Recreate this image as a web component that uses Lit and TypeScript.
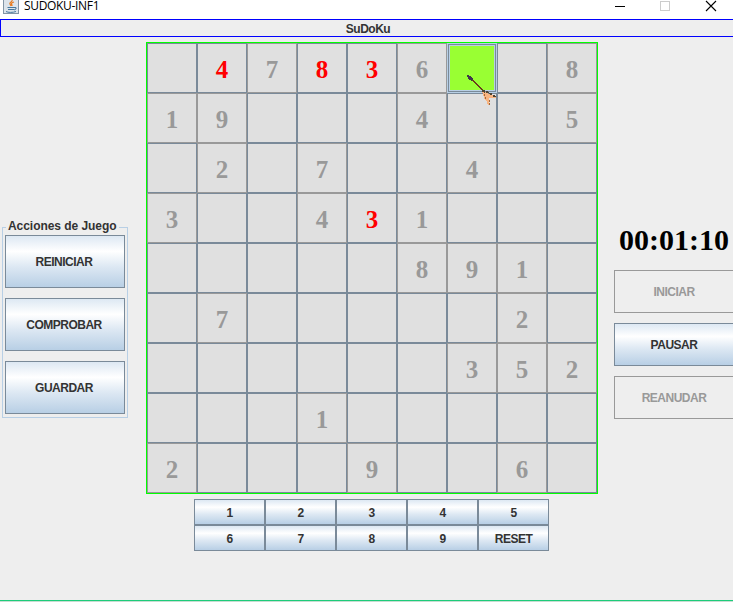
import { LitElement, html, css, svg } from "lit";
import { customElement } from "lit/decorators.js";
import { classMap } from "lit/directives/class-map.js";

// Digits typed by the player carry a trailing "!"; "*" is the selected cell.
const ROWS = [
  ". 4! 7 8! 3! 6 * . 8",
  "1 9 . . . 4 . . 5",
  ". 2 . 7 . . 4 . .",
  "3 . . 4 3! 1 . . .",
  ". . . . . 8 9 1 .",
  ". 7 . . . . . 2 .",
  ". . . . . . 3 5 2",
  ". . . 1 . . . . .",
  "2 . . . 9 . . 6 .",
].map((r) => r.split(" "));

const KEYS = ["1", "2", "3", "4", "5", "6", "7", "8", "9", "RESET"];

const arrow = svg`
  <path d="M9 10 L22 22" stroke="#6b3d1c" stroke-width="1.2"/>
  <path d="M5 6h2v1h2v1h1v1h1v2h-1v1h-1v-1H7v-1H6V8H5z" fill="#40384c"/>
  <path d="M20 22 L24 23 L29 26 L34 27 V29 H28 L27 29 V36 H26 L25 33 L23 31z" fill="#f9b581"/>
  <path d="M20 22 L25 23 L29 25 L34 28" stroke="#4e4434" stroke-width="2" stroke-dasharray="3 1"/>
  <path d="M22 25 L24 31 M27 31 V36" stroke="#a2683e" stroke-width="1" stroke-dasharray="2 1"/>`;

@customElement("app-root")
export class AppRoot extends LitElement {
  static styles = css`
    :host {
      display: flex;
      flex-direction: column;
      width: 733px;
      height: 602px;
      overflow: hidden;
      background: #eee;
      color: #333;
      font: bold 12px "Liberation Sans", Arial, sans-serif;
    }
    * { box-sizing: border-box; }
    svg { display: block; fill: none; }
    .titlebar {
      flex: none;
      display: flex;
      height: 19px;
      background: #fff;
      color: #000;
      font: 12px/12px "Open Sans", "Noto Sans", sans-serif;
    }
    .java { width: 16px; height: 14px; margin-left: 3px; }
    .name { flex: 1; margin-left: 5px; letter-spacing: -0.32px; }
    .controls { width: 118px; height: 14px; flex: none; }
    .heading {
      flex: none;
      width: 736px;
      height: 18px;
      border: 1px solid #00f;
      text-align: center;
      line-height: 18px;
      letter-spacing: -0.5px;
    }
    .main { display: flex; flex: none; height: 563px; }
    .left { width: 146px; padding: 182px 0 0 2px; }
    .actions {
      width: 126px;
      height: 199px;
      margin: 0;
      padding: 0 2px;
      border: 1px solid #b8cfe5;
      display: flex;
      flex-direction: column;
      gap: 10px;
    }
    .actions legend {
      padding: 0 2px;
      margin-left: 1px;
      height: 16px;
      line-height: 15px;
      letter-spacing: -0.05px;
    }
    button {
      display: block;
      margin: 0;
      padding: 0;
      border: 1px solid #7a8a99;
      border-radius: 0;
      color: #333;
      font: inherit;
      letter-spacing: -0.5px;
      background: linear-gradient(#dde8f3, #fff 30%, #dde8f3 60%, #b8cfe5);
    }
    button:disabled { background: #eee; border-color: #999; color: #999; }
    .actions button { width: 120px; height: 53px; flex: none; padding-right: 2px; }
    .center { width: 452px; padding-top: 5px; }
    .board {
      display: grid;
      grid-template-columns: repeat(9, 50px);
      grid-auto-rows: 50px;
      border: 1px solid #0f0;
    }
    .cell {
      border: 1px solid #7a8a99;
      background: #e0e0e0;
      color: #999;
      font: bold 25px/52px "Liberation Serif", "Times New Roman", serif;
      text-align: center;
    }
    .given { border-color: #999; }
    .typed { color: #f00; }
    .selected {
      position: relative;
      background: #9f3;
      border-color: #b8cfe5;
      box-shadow: inset 0 0 0 1px #7a8a99, inset 0 0 0 2px #b8cfe5;
    }
    .cursor { position: absolute; left: 14px; top: 25px; z-index: 1; }
    .keypad {
      display: grid;
      grid-template-columns: repeat(5, 71px);
      grid-auto-rows: 26px;
      margin: 5px 0 0 48px;
    }
    .keypad button { padding-top: 2px; }
    .right { padding: 183px 0 0 16px; width: 135px; flex: none; }
    .time {
      height: 50px;
      width: 120px;
      text-align: center;
      white-space: nowrap;
      color: #000;
      font: bold 30px/40px "Liberation Serif", "Times New Roman", serif;
    }
    .right button { width: 120px; height: 43px; margin-bottom: 10px; }
    .edge { flex: none; height: 2px; border-top: 1px solid #1dcc7a; background: #c8dcd2; }
  `;

  private cell(v: string) {
    const selected = v === "*";
    const typed = v.endsWith("!");
    const given = /^\d$/.test(v);
    return html`<div class=${classMap({ cell: true, selected, typed, given })}>${/\d/.test(v) ? v[0] : ""}${selected
      ? html`<svg class="cursor" width="40" height="40" viewBox="0 0 40 40" shape-rendering="crispEdges">${arrow}</svg>`
      : ""}</div>`;
  }

  render() {
    return html`
      <div class="titlebar">
        <svg class="java" viewBox="0 0 16 14">
          <path d="M0 0h16v14H0z" fill="#8295a6"/>
          <path d="M1 0h14v13H1z" fill="#dce4eb"/>
          <path d="M9 0C10 2 6 2 7 4l1 2M11 2C8 3 8 4 9 5v1" stroke="#e77b20" stroke-width="1.2"/>
          <path d="M4.500 7.500h7M5 9.500h6M3 11.500c2 1.200 7 1.200 10 0M11 7.500h2v1.500l-2 1" stroke="#47789d"/>
        </svg>
        <div class="name">SUDOKU-INF1</div>
        <svg class="controls" viewBox="0 0 118 14" shape-rendering="crispEdges">
          <path d="M0 6h10v1H0z" fill="#000"/>
          <path d="M45.500 1.500h9v9h-9z" stroke="#ccc"/>
          <path d="M91 1l10 10M101 1L91 11" stroke="#000" stroke-width="1.100" shape-rendering="auto"/>
        </svg>
      </div>
      <div class="heading">SuDoKu</div>
      <div class="main">
        <div class="left">
          <fieldset class="actions">
            <legend>Acciones de Juego</legend>
            <button>REINICIAR</button>
            <button>COMPROBAR</button>
            <button>GUARDAR</button>
          </fieldset>
        </div>
        <div class="center">
          <div class="board">${ROWS.map((r) => r.map((v) => this.cell(v)))}</div>
          <div class="keypad">${KEYS.map((k) => html`<button>${k}</button>`)}</div>
        </div>
        <div class="right">
          <div class="time">00:01:10</div>
          <button disabled>INICIAR</button>
          <button>PAUSAR</button>
          <button disabled>REANUDAR</button>
        </div>
      </div>
      <div class="edge"></div>
    `;
  }
}
